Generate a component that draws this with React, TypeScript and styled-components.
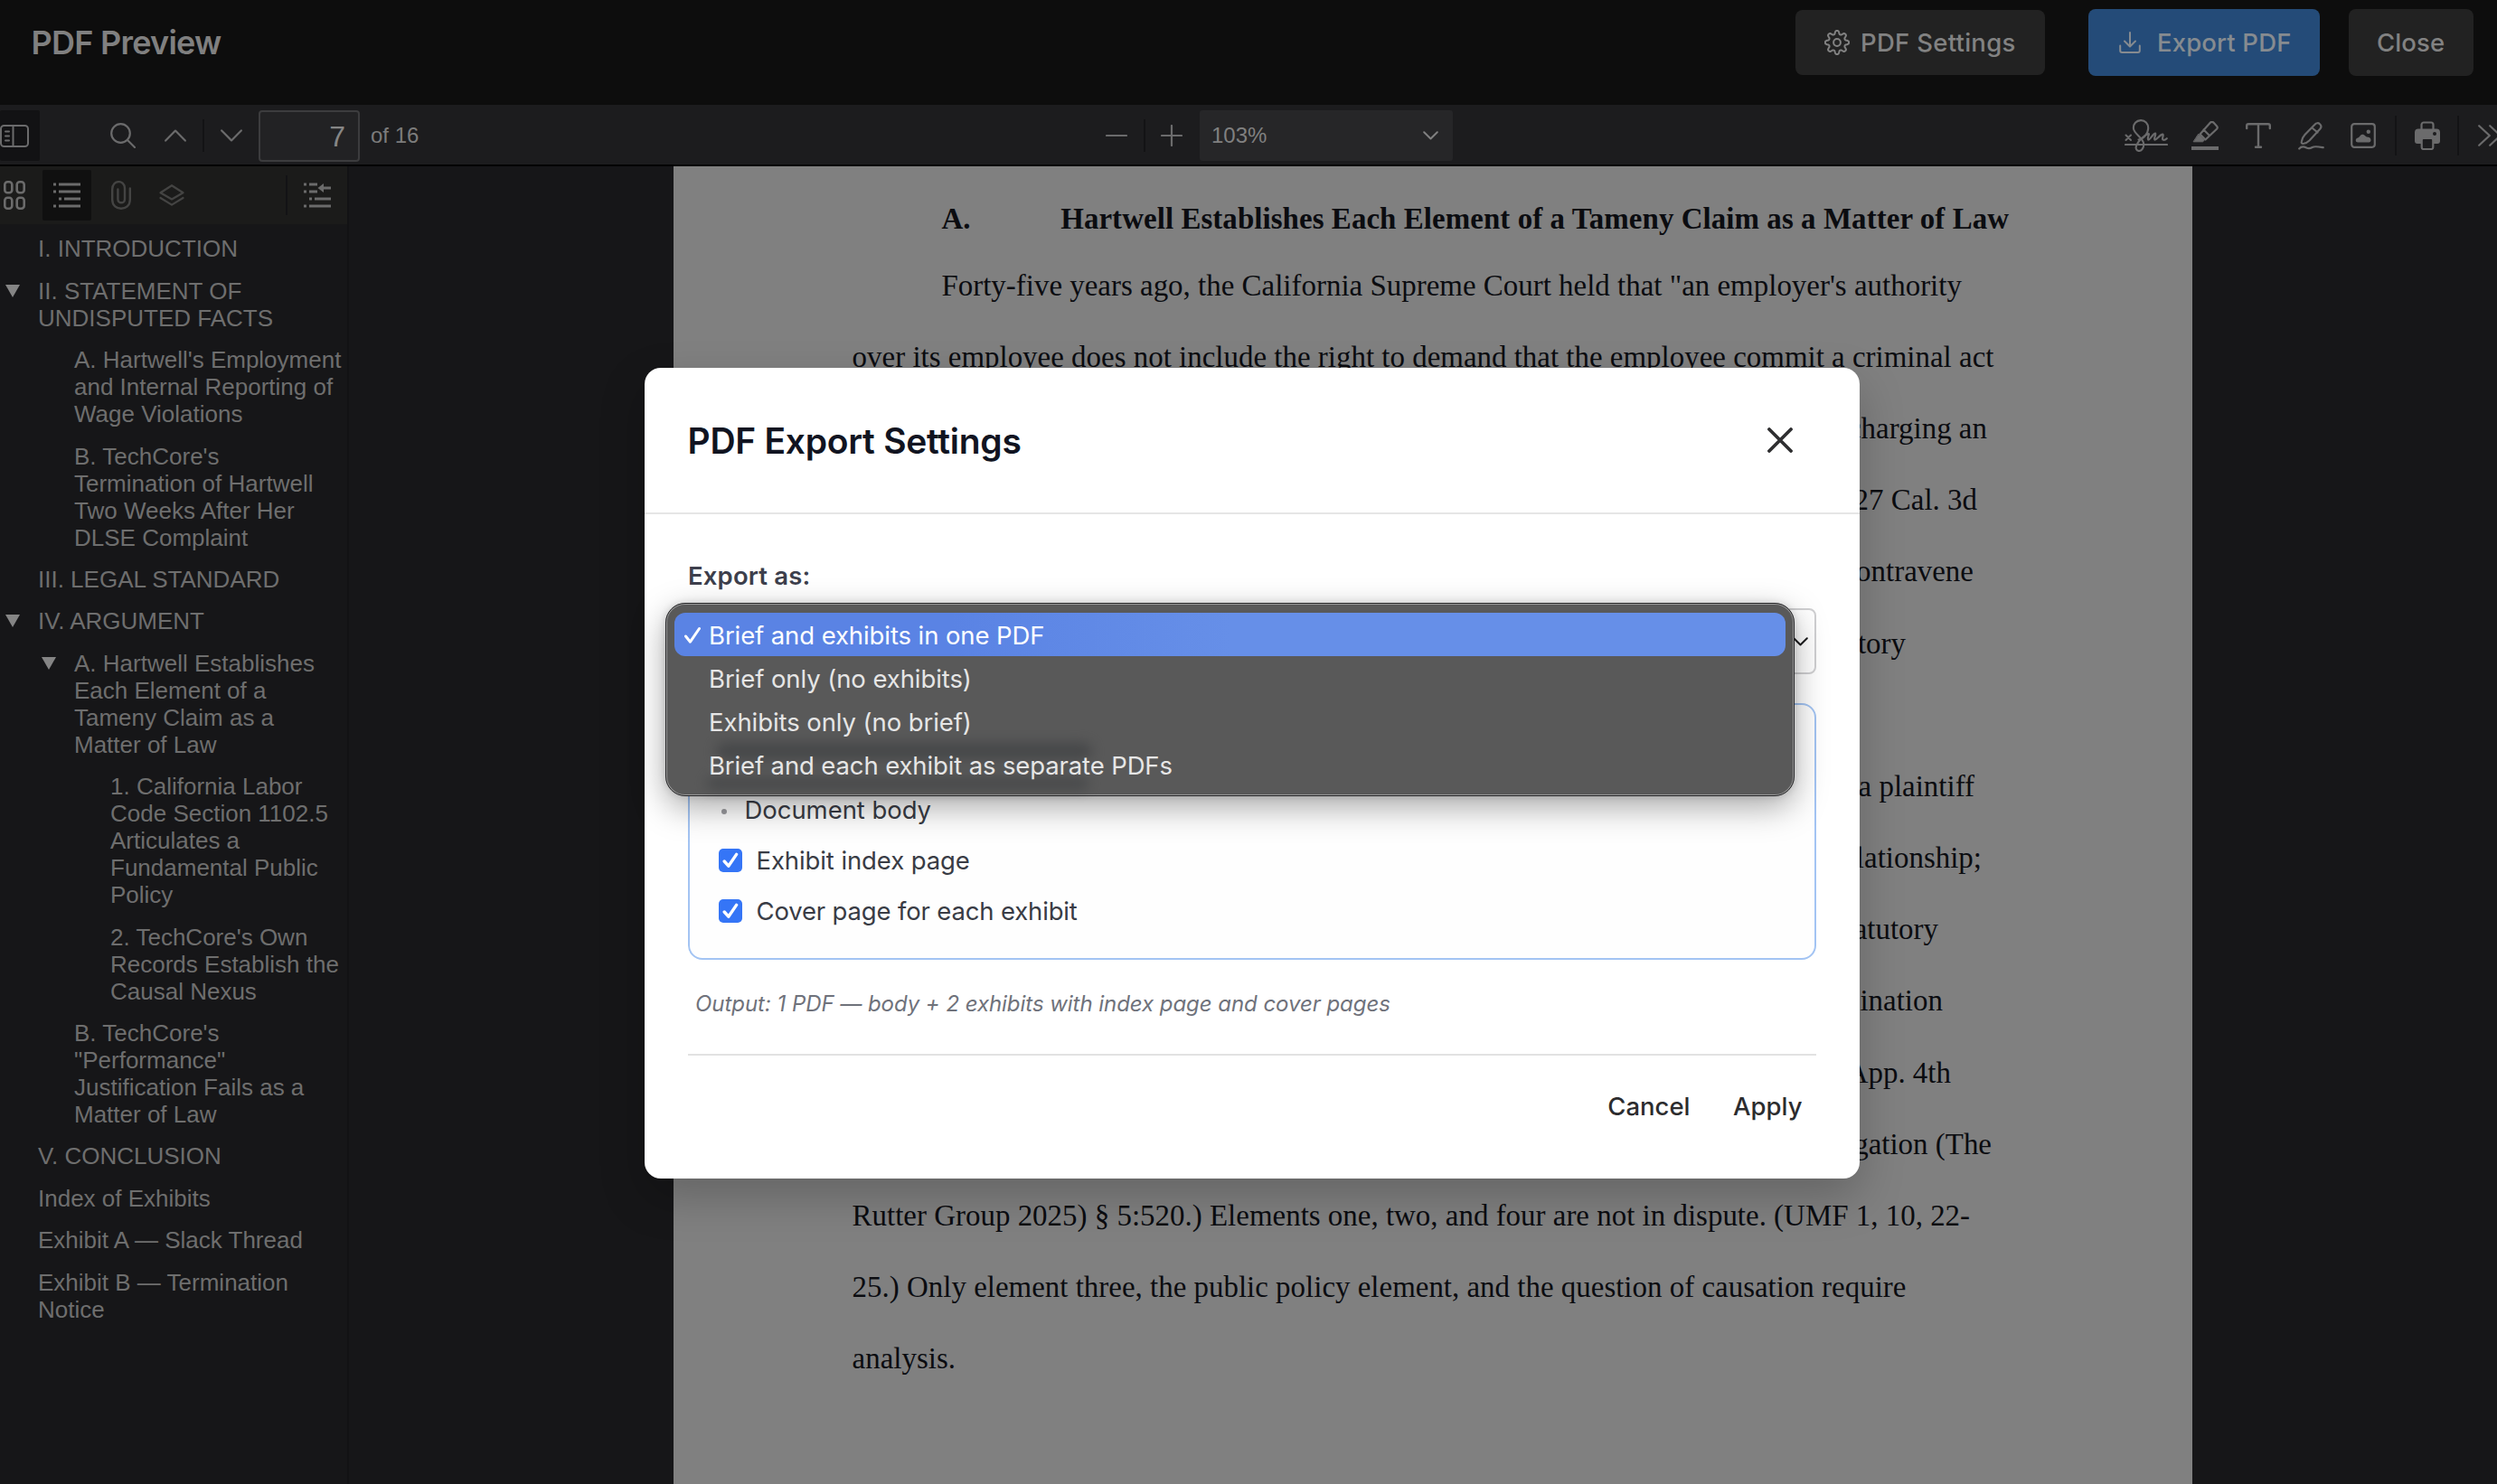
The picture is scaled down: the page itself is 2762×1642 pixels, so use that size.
import React from "react";
import styled, { createGlobalStyle, css } from "styled-components";

const ui = `Inter, "Liberation Sans", sans-serif`;
const sans = `"Liberation Sans", Arial, sans-serif`;
const serif = `"Liberation Serif", "Times New Roman", serif`;

const GlobalStyle = createGlobalStyle`
  * { box-sizing: border-box; }
  body { margin: 0; background: #161618; overflow: hidden; }
  button { font: inherit; border: 0; background: none; padding: 0; margin: 0; color: inherit; }
`;

const Screen = styled.div`
  width: 2762px;
  height: 1642px;
  display: flex;
  flex-direction: column;
  overflow: hidden;
  position: relative;
  background: #161618;
  font-family: ${ui};
`;

/* ---------- header ---------- */

const Header = styled.header`
  height: 116px;
  flex: none;
  display: flex;
  align-items: flex-start;
  padding: 10px 26px 0 34.5px;
  background: #0d0d0d;
  color: #808080;
`;

const AppTitle = styled.h1`
  margin: 0 auto 0 0;
  font-size: 36px;
  line-height: 74px;
  font-weight: 600;
  letter-spacing: -0.75px;
`;

const HeaderButton = styled.button<{ $primary?: boolean; $w: number; $h: number; $pad: number; $gap?: number; $ml?: number; $ls?: number }>`
  display: flex;
  align-items: center;
  gap: ${(p) => p.$gap ?? 0}px;
  width: ${(p) => p.$w}px;
  height: ${(p) => p.$h}px;
  margin: ${(p) => (74 - p.$h) / 2}px 0 0 ${(p) => p.$ml ?? 0}px;
  padding-left: ${(p) => p.$pad}px;
  border-radius: 8px;
  background: ${(p) => (p.$primary ? "#244b78" : "#222222")};
  color: ${(p) => (p.$primary ? "#868b90" : "#828282")};
  font-size: 27.5px;
  font-weight: 500;
  letter-spacing: ${(p) => p.$ls ?? 0}px;
  white-space: nowrap;
`;

/* ---------- viewer toolbar ---------- */

const Toolbar = styled.div`
  height: 68px;
  flex: none;
  display: flex;
  align-items: center;
  padding-top: 2px;
  background: #1c1c1e;
  border-bottom: 2px solid #020202;
  color: #6b6b6c;
  font-family: ${sans};
  overflow: hidden;
`;

const ToolSlot = styled.div<{ $w: number; $bg?: string; $start?: boolean }>`
  flex: none;
  width: ${(p) => p.$w}px;
  height: 56px;
  display: flex;
  align-items: center;
  justify-content: ${(p) => (p.$start ? "flex-start" : "center")};
  ${(p) =>
    p.$bg &&
    css`
      background: ${p.$bg};
      border-radius: 2px;
    `}
`;

const Space = styled.div<{ $w: number }>`
  flex: none;
  width: ${(p) => p.$w}px;
`;

const Divider = styled.div<{ $h: number }>`
  flex: none;
  width: 2px;
  height: ${(p) => p.$h}px;
  background: #131315;
`;

const PageNumber = styled.div`
  flex: none;
  width: 112px;
  height: 57px;
  border: 2px solid #3c3c3e;
  border-radius: 4px;
  background: #222224;
  color: #868686;
  font-size: 32px;
  line-height: 54px;
  text-align: right;
  padding-right: 14px;
`;

const PageCount = styled.span`
  flex: none;
  width: 812px;
  padding-left: 12px;
  font-size: 24px;
  line-height: 56px;
  color: #7c7c7c;
`;

const ZoomSelect = styled.div`
  flex: none;
  width: 280px;
  height: 56px;
  display: flex;
  align-items: center;
  justify-content: space-between;
  padding: 0 16px 0 13px;
  background: #262628;
  border-radius: 3px;
  color: #808080;
  font-size: 24px;
  line-height: 56px;
`;

/* ---------- body ---------- */

const Body = styled.div`
  flex: 1;
  min-height: 0;
  display: flex;
`;

const Sidebar = styled.aside`
  width: 386px;
  flex: none;
  border-right: 2px solid #121214;
  background: #161618;
  font-family: ${sans};
`;

const SideTools = styled.div`
  height: 64px;
  display: flex;
  align-items: center;
  background: #1b1b1a;
  color: #6b6b6b;
`;

const Dim = styled.span`
  display: flex;
  color: #444443;
`;

const Outline = styled.ul`
  list-style: none;
  margin: 0;
  padding: 12.4px 0 0;
`;

const OutlineItem = styled.li<{ $level: number }>`
  display: flex;
  align-items: flex-start;
  padding-left: ${(p) => 6 + p.$level * 40}px;
  margin-bottom: 16.42px;
  font-size: 26px;
  line-height: 30px;
  color: #6e6e6e;
  white-space: nowrap;
`;

const Arrow = styled.span<{ $open?: boolean }>`
  flex: none;
  width: 36px;
  height: 30px;
  display: flex;
  align-items: center;
  &::before {
    content: "";
    display: ${(p) => (p.$open ? "block" : "none")};
    border: 8px solid transparent;
    border-top: 14px solid #858585;
    border-bottom: 0;
  }
`;

const Canvas = styled.main`
  flex: 1;
  padding-left: 359px;
`;

const Paper = styled.article`
  width: 1680px;
  height: 100%;
  padding: 22.6px 0 0 197.6px;
  background: #808080;
  color: #0b0c10;
  font-family: ${serif};
  font-size: 32.96px;
`;

const PaperHeading = styled.h2`
  display: flex;
  margin: 0 0 0 98.8px;
  font-size: 32.96px;
  line-height: 70px;
  font-weight: 700;
  letter-spacing: 0.06px;
  white-space: nowrap;
`;

const HeadingNumber = styled.span`
  width: 131.8px;
`;

const Line = styled.div<{ $indent?: boolean; $end?: number }>`
  height: 79.2px;
  line-height: 79.2px;
  white-space: nowrap;
  padding-left: ${(p) => (p.$indent ? 98.8 : 0)}px;
  ${(p) =>
    p.$end &&
    css`
      width: ${p.$end - 942.6}px;
      text-align: right;
    `}
`;

/* ---------- modal ---------- */

const Overlay = styled.div`
  position: absolute;
  inset: 0;
  padding: 407px 0 0 713px;
`;

const Modal = styled.section`
  width: 1344px;
  height: 897px;
  background: #fff;
  border-radius: 18px;
  box-shadow: 0 20px 50px rgba(0, 0, 0, 0.22);
`;

const ModalHeader = styled.div`
  height: 162px;
  display: flex;
  align-items: center;
  justify-content: space-between;
  padding: 0 74px 0 47.5px;
  border-bottom: 2px solid #e6e6e6;
  color: #2f2f31;
`;

const ModalTitle = styled.h2`
  margin: 0;
  font-size: 39px;
  font-weight: 600;
  letter-spacing: -0.28px;
  color: #111421;
`;

const ModalBody = styled.div`
  padding: 48px 48px 0;
`;

const FieldLabel = styled.div`
  height: 40px;
  line-height: 40px;
  font-size: 27.5px;
  font-weight: 600;
  color: #3d3f4c;
  letter-spacing: 0.15px;
`;

const Field = styled.div`
  position: relative;
  margin-top: 16px;
`;

const SelectBox = styled.div`
  height: 73px;
  display: flex;
  align-items: center;
  justify-content: flex-end;
  padding: 0 7px 0 0;
  border: 2px solid #d0d0d2;
  border-radius: 8px;
  background: #fff;
  color: #1c1c1e;
`;

const Menu = styled.ul`
  list-style: none;
  position: absolute;
  left: -25px;
  top: -6px;
  width: 1249px;
  height: 214px;
  margin: 0;
  padding: 9px 8px 0 8px;
  border: 2px solid #989898;
  border-radius: 22px;
  outline: 1.5px solid #252527;
  outline-offset: -1px;
  background: #595959;
  box-shadow: 0 12px 36px rgba(0, 0, 0, 0.34), 0 0 8px rgba(0, 0, 0, 0.14);
  isolation: isolate;
  z-index: 2;

  &::before,
  &::after {
    content: "";
    position: absolute;
    z-index: -1;
    left: 54px;
    width: 416px;
    border-radius: 10px;
    background: #3f4143;
    opacity: 0.75;
    filter: blur(7px);
  }
  &::before {
    top: 153px;
    height: 18px;
  }
  &::after {
    top: 192px;
    left: 44px;
    width: 422px;
    height: 12px;
  }
`;

const Option = styled.li<{ $active?: boolean; $ls: number }>`
  height: 48px;
  display: flex;
  align-items: center;
  padding: 2px 0 0 10px;
  border-radius: 12px;
  font-size: 27.5px;
  font-weight: 400;
  letter-spacing: ${(p) => p.$ls}px;
  color: ${(p) => (p.$active ? "#ffffff" : "#e6e6e6")};
  background: ${(p) => (p.$active ? "linear-gradient(90deg, #5a83e4, #5a83e4 25%, #668fe8 50%)" : "transparent")};
`;

const CheckSlot = styled.span`
  flex: none;
  width: 28px;
  height: 20px;
  display: flex;
  align-items: center;
`;

const IncludePanel = styled.div`
  height: 284px;
  margin-top: 32px;
  display: flex;
  flex-direction: column;
  justify-content: flex-end;
  padding: 0 32px 24px;
  border: 2px solid #a3c4f3;
  border-radius: 16px;
  background: #fefefe;
`;

const IncludeRow = styled.div<{ $gap: number; $ls: number }>`
  height: 56px;
  display: flex;
  align-items: center;
  gap: ${(p) => p.$gap}px;
  font-size: 27.5px;
  letter-spacing: ${(p) => p.$ls}px;
  color: #393c45;
`;

const Bullet = styled.span`
  width: 6px;
  height: 6px;
  margin: 3px 0 0 3px;
  border-radius: 50%;
  background: #9b9b9f;
`;

const Checkbox = styled.span`
  width: 26px;
  height: 26px;
  display: flex;
  align-items: center;
  justify-content: center;
  border-radius: 5px;
  background: #3575f6;
  color: #fff;
`;

const Output = styled.p`
  margin: 33px 0 0 8px;
  height: 32px;
  line-height: 32px;
  font-size: 24px;
  font-style: italic;
  letter-spacing: -0.05px;
  color: #6f727b;
`;

const Footer = styled.div`
  margin-top: 39px;
  height: 114px;
  display: flex;
  align-items: center;
  justify-content: flex-end;
  gap: 16px;
  border-top: 2px solid #e2e2e2;
`;

const TextButton = styled.button`
  padding: 0 15.5px 0 16px;
  font-size: 27.5px;
  font-weight: 500;
  color: #2c2c2e;
`;

/* ---------- icons ---------- */

const Svg = styled.svg`
  flex: none;
  display: block;
`;

type IconProps = { w: number; h: number; sw?: number; color?: string; children: React.ReactNode };

const Icon = ({ w, h, sw = 2.2, color = "currentColor", children }: IconProps) => (
  <Svg
    width={w}
    height={h}
    viewBox={`0 0 ${w} ${h}`}
    fill="none"
    stroke={color}
    strokeWidth={sw}
    strokeLinecap="round"
    strokeLinejoin="round"
  >
    {children}
  </Svg>
);

const gearPath = (() => {
  const pts: string[] = [];
  const n = 96;
  for (let i = 0; i < n; i++) {
    const a = (i / n) * Math.PI * 2;
    const wave = Math.tanh(Math.cos(a * 8) * 1.6) / Math.tanh(1.6);
    const r = 11.2 + 1.9 * wave;
    pts.push(`${(14 + r * Math.sin(a)).toFixed(2)} ${(14 - r * Math.cos(a)).toFixed(2)}`);
  }
  return `M${pts.join("L")}Z`;
})();

const GearIcon = () => (
  <Icon w={28} h={28} sw={2}>
    <path d={gearPath} />
    <circle cx="14" cy="14" r="3.9" />
  </Icon>
);

const DownloadIcon = () => (
  <Icon w={24} h={25} sw={2}>
    <path d="M12 1v15M6 10.5l6 6 6-6M1.2 15.5v5.6a2 2 0 0 0 2 2h17.6a2 2 0 0 0 2-2v-5.6" />
  </Icon>
);

const SidebarIcon = () => (
  <Icon w={32} h={25} sw={2}>
    <rect x="1" y="1" width="30" height="23" rx="3.5" />
    <path d="M14.5 1v23M6 7.5h4M6 12.5h4M6 17.5h4" />
  </Icon>
);

const SearchIcon = () => (
  <Icon w={28} h={28}>
    <circle cx="11.5" cy="11.5" r="10.3" />
    <path d="M19 19l8 8" />
  </Icon>
);

const ChevronUp = () => (
  <Icon w={24} h={14}>
    <path d="M1.2 12.6L12 1.6l10.8 11" />
  </Icon>
);

const ChevronDown = () => (
  <Icon w={24} h={14}>
    <path d="M1.2 1.4L12 12.4 22.8 1.4" />
  </Icon>
);

const SmallChevron = () => (
  <Icon w={17} h={10} sw={2}>
    <path d="M1.2 1.2L8.5 8.5 15.8 1.2" />
  </Icon>
);

const MinusIcon = () => (
  <Icon w={24} h={24}>
    <path d="M1 12h22" />
  </Icon>
);

const PlusIcon = () => (
  <Icon w={24} h={24}>
    <path d="M1 12h22M12 1v22" />
  </Icon>
);

const SignatureIcon = () => (
  <Icon w={48} h={36} sw={2.1}>
    <path d="M1 28h46" />
    <path d="M1.5 17.5l5.500 5.500M7 17.500l-5.500 5.500" />
    <path d="M15.500 22.500C20.500 22 26 16.500 26.200 10 26.400 4.500 22.500 1 18 1.100 13 1.300 9.600 5 9.900 10 10.200 16 20.500 20.500 21.200 27 21.600 31.500 19 35 16 35 13.200 35 12 32.300 13 29.300 14.800 24.500 21 17.500 26.800 16 27.800 16.200 24.800 20.500 26.200 22.600 28.200 23.200 31.500 15.600 34 15.600 35.600 16.200 31.800 21.500 33.400 22.600 35.600 23 38.600 17 42.300 16.600 44 17.200 40.800 21.600 42.400 22.600 44 23.200 45.600 22.400 46.800 21.200" />
  </Icon>
);

const HighlightIcon = () => (
  <Icon w={30} h={32}>
    <path d="M21 1.6a2.500 2.500 0 0 1 3.400 0l3.600 3.800a2.500 2.500 0 0 1 0 3.400L15.500 20.500 9.500 14.500zM13.500 9.500l6.500 6.500" />
    <path d="M8 14.500l6.500 6.500-2 1.800H2.500z" fill="currentColor" strokeWidth="1" />
    <path d="M0 28h30v4H0z" fill="currentColor" stroke="none" />
  </Icon>
);

const TextIcon = () => (
  <Icon w={28} h={28} sw={2.4}>
    <path d="M1.200 6V3a1.800 1.800 0 0 1 1.800-1.800h22A1.800 1.800 0 0 1 26.800 3v3M14 1.500v25M11 26.800h6" />
  </Icon>
);

const DrawIcon = () => (
  <Icon w={29} h={31}>
    <path d="M18.500 2.800c1.600-2 4-2 5.500-.6 1.700 1.500 1.800 3.700.2 5.600L12.500 20.500c-1.500 1.500-4.500 3.200-7 3.500-1.500 0-2-1-1.700-2.200.5-3 2-6 3.700-7.800zM15.500 6.500l6 5" />
    <path d="M1.200 29.500c3-3.500 6-2 8-1s4 1 6.500-.5 5-1 12 .2" />
  </Icon>
);

const ImageIcon = () => (
  <Icon w={28} h={28}>
    <rect x="1.200" y="1.200" width="25.600" height="25.600" rx="3" />
    <path d="M8 21.500c-2.500 0-3-3-1-4.500 1.500-1 2-.5 3-2s2-2.800 4-2.200 2.500 2.700 4 2.700c2.500 0 4.500 1 4.500 3.500 0 1.500-1 2.500-2 2.500z" fill="currentColor" stroke="none" />
    <circle cx="19.800" cy="9.800" r="2.200" fill="currentColor" stroke="none" />
  </Icon>
);

const PrintIcon = () => (
  <Icon w={28} h={32}>
    <path d="M7.500 9V4a2.500 2.500 0 0 1 2.500-2.500h8A2.500 2.500 0 0 1 20.500 4v5" />
    <path d="M4 8.500h20a4 4 0 0 1 4 4V22a3 3 0 0 1-3 3H3a3 3 0 0 1-3-3v-9.500a4 4 0 0 1 4-4z" fill="currentColor" stroke="none" />
    <rect x="7.700" y="19" width="12.600" height="12" rx="2" fill="#1c1c1e" />
    <circle cx="22" cy="14" r="2" fill="#1c1c1e" stroke="none" />
  </Icon>
);

const MoreIcon = () => (
  <Icon w={26} h={24}>
    <path d="M1.200 1.200L12.800 12 1.200 22.800M13.200 1.200L24.800 12 13.200 22.800" />
  </Icon>
);

const ThumbsIcon = () => (
  <Icon w={24} h={32} sw={2.6}>
    <rect x="1.300" y="1.300" width="8" height="12" rx="3" />
    <rect x="14.700" y="1.300" width="8" height="12" rx="3" />
    <rect x="1.300" y="18.700" width="8" height="12" rx="3" />
    <rect x="14.700" y="18.700" width="8" height="12" rx="3" />
  </Icon>
);

const OutlineIcon = () => (
  <Icon w={30} h={28} sw={3}>
    <g strokeLinecap="butt">
      <path d="M0 2h3M6 2h24M0 10h3M6 10h24M6 18h3M12 18h18M0 26h3M6 26h24" />
    </g>
  </Icon>
);

const ClipIcon = () => (
  <Icon w={22} h={32} sw={2.400}>
    <path d="M20.800 8.500v12.500c0 13-19.600 13-19.600 0V9.500C1.200-1.500 15-1.500 15 8.500v12c0 5-7.600 5-7.600 0V9.500" />
  </Icon>
);

const LayersIcon = () => (
  <Icon w={28} h={24}>
    <path d="M14 1.200L26.500 9.200 14 16.500 1.500 9.200zM1.500 15L14 22.600 26.500 15" />
  </Icon>
);

const CurrentOutlineIcon = () => (
  <Icon w={30} h={28} sw={3}>
    <g strokeLinecap="butt">
      <path d="M0 2h3M6 2h9M0 10h3M6 10h9M6 18h3M12 18h18M0 26h3M6 26h24M21 6h9" />
    </g>
    <path d="M15.500 6l6.500-5v10z" fill="currentColor" stroke="none" />
  </Icon>
);

const CloseIcon = () => (
  <Icon w={28} h={28} sw={3.8}>
    <path d="M2 2l24 24M26 2L2 26" />
  </Icon>
);

const MenuCheck = () => (
  <Icon w={20} h={20} sw={3} color="#fff">
    <path d="M2.500 11l5 6.200L17.500 2.500" />
  </Icon>
);

const BoxCheck = () => (
  <Icon w={18} h={18} sw={3.4} color="#fff">
    <path d="M2.200 10l4.600 5.200L15.600 2.400" />
  </Icon>
);

/* ---------- data ---------- */

type Entry = { level: number; open?: boolean; lines: string[] };

const outline: Entry[] = [
  { level: 0, lines: ["I. INTRODUCTION"] },
  { level: 0, open: true, lines: ["II. STATEMENT OF", "UNDISPUTED FACTS"] },
  { level: 1, lines: ["A. Hartwell's Employment", "and Internal Reporting of", "Wage Violations"] },
  { level: 1, lines: ["B. TechCore's", "Termination of Hartwell", "Two Weeks After Her", "DLSE Complaint"] },
  { level: 0, lines: ["III. LEGAL STANDARD"] },
  { level: 0, open: true, lines: ["IV. ARGUMENT"] },
  { level: 1, open: true, lines: ["A. Hartwell Establishes", "Each Element of a", "Tameny Claim as a", "Matter of Law"] },
  { level: 2, lines: ["1. California Labor", "Code Section 1102.5", "Articulates a", "Fundamental Public", "Policy"] },
  { level: 2, lines: ["2. TechCore's Own", "Records Establish the", "Causal Nexus"] },
  { level: 1, lines: ["B. TechCore's", "\"Performance\"", "Justification Fails as a", "Matter of Law"] },
  { level: 0, lines: ["V. CONCLUSION"] },
  { level: 0, lines: ["Index of Exhibits"] },
  { level: 0, lines: ["Exhibit A — Slack Thread"] },
  { level: 0, lines: ["Exhibit B — Termination", "Notice"] },
];

const paragraph: { text: string; indent?: boolean; end?: number }[] = [
  { text: "Forty-five years ago, the California Supreme Court held that \"an employer's authority", indent: true },
  { text: "over its employee does not include the right to demand that the employee commit a criminal act" },
  { text: "charging an", end: 2198 },
  { text: "27 Cal. 3d", end: 2187 },
  { text: "contravene", end: 2183 },
  { text: "statutory", end: 2108 },
  { text: "" },
  { text: "a plaintiff", end: 2184 },
  { text: "relationship;", end: 2192 },
  { text: "statutory", end: 2144 },
  { text: "termination", end: 2149 },
  { text: "App. 4th", end: 2158 },
  { text: "Litigation (The", end: 2203 },
  { text: "Rutter Group 2025) § 5:520.) Elements one, two, and four are not in dispute. (UMF 1, 10, 22-" },
  { text: "25.) Only element three, the public policy element, and the question of causation require" },
  { text: "analysis." },
];

const options = [
  { text: "Brief and exhibits in one PDF", ls: -0.1 },
  { text: "Brief only (no exhibits)", ls: -0.08 },
  { text: "Exhibits only (no brief)", ls: -0.08 },
  { text: "Brief and each exhibit as separate PDFs", ls: -0.13 },
];

export default function App() {
  return (
    <Screen>
      <GlobalStyle />
      <Header>
        <AppTitle>PDF Preview</AppTitle>
        <HeaderButton $w={276} $h={72} $pad={32} $gap={12} $ls={0.28}>
          <GearIcon />
          PDF Settings
        </HeaderButton>
        <HeaderButton $primary $w={256} $h={74} $pad={34} $gap={18} $ml={48} $ls={0.15}>
          <DownloadIcon />
          Export PDF
        </HeaderButton>
        <HeaderButton $w={138} $h={74} $pad={31} $ml={32} $ls={0.1}>
          Close
        </HeaderButton>
      </Header>

      <Toolbar>
        <ToolSlot $w={44} $bg="#121214" $start><SidebarIcon /></ToolSlot>
        <Space $w={64} />
        <ToolSlot $w={56}><SearchIcon /></ToolSlot>
        <ToolSlot $w={60}><ChevronUp /></ToolSlot>
        <Divider $h={36} />
        <Space $w={2} />
        <ToolSlot $w={56}><ChevronDown /></ToolSlot>
        <Space $w={2} />
        <PageNumber>7</PageNumber>
        <PageCount>of 16</PageCount>
        <ToolSlot $w={50}><MinusIcon /></ToolSlot>
        <Space $w={5} />
        <Divider $h={36} />
        <Space $w={4} />
        <ToolSlot $w={50}><PlusIcon /></ToolSlot>
        <Space $w={6} />
        <ZoomSelect>
          103%
          <SmallChevron />
        </ZoomSelect>
        <Space $w={737} />
        <ToolSlot $w={60}><SignatureIcon /></ToolSlot>
        <Space $w={7} />
        <ToolSlot $w={56}><HighlightIcon /></ToolSlot>
        <ToolSlot $w={62}><TextIcon /></ToolSlot>
        <ToolSlot $w={54}><DrawIcon /></ToolSlot>
        <ToolSlot $w={62}><ImageIcon /></ToolSlot>
        <Space $w={4} />
        <Divider $h={44} />
        <ToolSlot $w={67}><PrintIcon /></ToolSlot>
        <Divider $h={44} />
        <Space $w={21} />
        <MoreIcon />
      </Toolbar>

      <Body>
        <Sidebar>
          <SideTools>
            <Space $w={4} />
            <ThumbsIcon />
            <Space $w={19} />
            <ToolSlot $w={54} $bg="#101010"><OutlineIcon /></ToolSlot>
            <Space $w={22} />
            <Dim><ClipIcon /></Dim>
            <Space $w={31} />
            <Dim><LayersIcon /></Dim>
            <Space $w={112} />
            <Divider $h={44} />
            <Space $w={18} />
            <CurrentOutlineIcon />
          </SideTools>
          <Outline>
            {outline.map((e, i) => (
              <OutlineItem key={i} $level={e.level}>
                <Arrow $open={e.open} />
                <span>
                  {e.lines.map((l, j) => (
                    <React.Fragment key={j}>
                      {j > 0 && <br />}
                      {l}
                    </React.Fragment>
                  ))}
                </span>
              </OutlineItem>
            ))}
          </Outline>
        </Sidebar>
        <Canvas>
          <Paper>
            <PaperHeading>
              <HeadingNumber>A.</HeadingNumber>
              Hartwell Establishes Each Element of a Tameny Claim as a Matter of Law
            </PaperHeading>
            {paragraph.map((l, i) => (
              <Line key={i} $indent={l.indent} $end={l.end}>{l.text}</Line>
            ))}
          </Paper>
        </Canvas>
      </Body>

      <Overlay>
        <Modal>
          <ModalHeader>
            <ModalTitle>PDF Export Settings</ModalTitle>
            <CloseIcon />
          </ModalHeader>
          <ModalBody>
            <FieldLabel>Export as:</FieldLabel>
            <Field>
              <SelectBox><SmallChevron /></SelectBox>
              <Menu>
                {options.map((o, i) => (
                  <Option key={o.text} $active={i === 0} $ls={o.ls}>
                    <CheckSlot>{i === 0 && <MenuCheck />}</CheckSlot>
                    {o.text}
                  </Option>
                ))}
              </Menu>
            </Field>
            <IncludePanel>
              <IncludeRow $gap={19.5} $ls={-0.05}><Bullet />Document body</IncludeRow>
              <IncludeRow $gap={15.5} $ls={-0.1}><Checkbox><BoxCheck /></Checkbox>Exhibit index page</IncludeRow>
              <IncludeRow $gap={15.5} $ls={-0.16}><Checkbox><BoxCheck /></Checkbox>Cover page for each exhibit</IncludeRow>
            </IncludePanel>
            <Output>Output: 1 PDF — body + 2 exhibits with index page and cover pages</Output>
            <Footer>
              <TextButton>Cancel</TextButton>
              <TextButton>Apply</TextButton>
            </Footer>
          </ModalBody>
        </Modal>
      </Overlay>
    </Screen>
  );
}
